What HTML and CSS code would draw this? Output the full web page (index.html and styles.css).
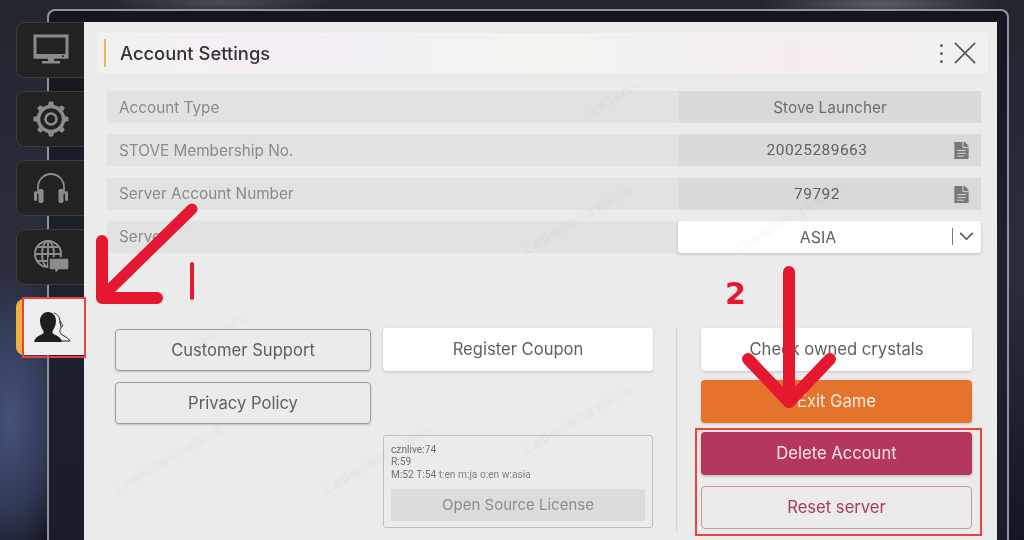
FILE: index.html
```html
<!DOCTYPE html>
<html lang="en">
<head>
<meta charset="utf-8">
<title>Account Settings</title>
<link rel="stylesheet" href="styles.css">
</head>
<body>
<div class="frame"></div>
<div class="stage">
  <nav class="sidebar">
    <div class="tab">
      <svg class="icon" viewBox="0 0 36 32"><rect x="2" y="2" width="32" height="21" fill="none" stroke="#8c8c8c" stroke-width="3"/><rect x="1" y="20" width="34" height="4.500" fill="#8c8c8c"/><circle cx="30" cy="22.200" r="1" fill="#222"/><path d="M15 24h6v3h-6z" fill="#8c8c8c"/><rect x="9" y="27" width="18" height="2.500" fill="#8c8c8c"/></svg>
    </div>
    <div class="tab">
      <svg class="icon" viewBox="0 0 36 36"><g fill="#8c8c8c"><path id="t" d="M15 4l1-3.500h4l1 3.500z"/><path d="M15 4l1-3.500h4l1 3.500z" transform="rotate(45 18 18)"/><path d="M15 4l1-3.500h4l1 3.500z" transform="rotate(90 18 18)"/><path d="M15 4l1-3.500h4l1 3.500z" transform="rotate(135 18 18)"/><path d="M15 4l1-3.500h4l1 3.500z" transform="rotate(180 18 18)"/><path d="M15 4l1-3.500h4l1 3.500z" transform="rotate(225 18 18)"/><path d="M15 4l1-3.500h4l1 3.500z" transform="rotate(270 18 18)"/><path d="M15 4l1-3.500h4l1 3.500z" transform="rotate(315 18 18)"/></g><circle cx="18" cy="18" r="12.500" fill="none" stroke="#8c8c8c" stroke-width="3.500"/><circle cx="18" cy="18" r="5.500" fill="none" stroke="#8c8c8c" stroke-width="2.500"/></svg>
    </div>
    <div class="tab">
      <svg class="icon" viewBox="0 0 36 36"><path d="M5 24V17a13 13 0 0 1 26 0v7" fill="none" stroke="#8c8c8c" stroke-width="1.800"/><rect x="1" y="21" width="3" height="10" rx="1.500" fill="#8c8c8c"/><rect x="5.500" y="19" width="5" height="14" rx="2" fill="#8c8c8c"/><rect x="25.500" y="19" width="5" height="14" rx="2" fill="#8c8c8c"/><rect x="32" y="21" width="3" height="10" rx="1.500" fill="#8c8c8c"/></svg>
    </div>
    <div class="tab">
      <svg class="icon" viewBox="0 0 36 36"><g fill="none" stroke="#8c8c8c" stroke-width="2"><circle cx="15" cy="15" r="13"/><ellipse cx="15" cy="15" rx="6" ry="13"/><path d="M2 15h26M4 8h22M4 22h22M15 2v26"/></g><path d="M16 19h20v12H26l-3.500 4-1-4H16z" fill="#8c8c8c" stroke="#222" stroke-width="1.500"/></svg>
    </div>
    <div class="tab tab-active">
      <svg class="icon icon-user" viewBox="0 0 38 32"><path d="M20 2c4 1 6 5 6 9 0 3 2 4 1 6s-2 4 0 6 7 3 9 7H26" fill="none" stroke="#222" stroke-width="1"/><path d="M14 1c5 0 8 4 8 9 0 4-2 8-3.500 10-.5 2 .5 3 3 4 3 1 5.500 3 6.500 7H0c1-4 3.500-6 6.500-7 2.500-1 3.500-2 3-4C8 18 6 14 6 10c0-5 3-9 8-9z" fill="#1f1f1f"/><path d="M26 10l3 5-2 1z" fill="#fff" stroke="#222" stroke-width=".8"/></svg>
    </div>
  </nav>
  <main class="panel">
    <header class="titlebar">
      <span class="tick"></span>
      <h1 class="title">Account Settings</h1>
      <span class="dots"><i></i><i></i><i></i></span>
      <svg class="close" viewBox="0 0 24 24"><path d="M1 1l22 22M23 1L1 23" fill="none" stroke="#555" stroke-width="1.800"/></svg>
    </header>
    <section class="rows">
      <div class="row"><span class="label">Account Type</span><span class="value">Stove Launcher</span></div>
      <div class="row"><span class="label">STOVE Membership No.</span><span class="value value-num">20025289663<svg class="doc" viewBox="0 0 15 20"><path d="M0 1h9l6 5v13H0z" fill="#777"/><path d="M10 0l5 5h-5z" fill="#777"/><path d="M9 1v6h6" fill="none" stroke="#d9d9d9"/><path d="M3 10h9M3 13h9M3 16h7" stroke="#d9d9d9"/></svg></span></div>
      <div class="row"><span class="label">Server Account Number</span><span class="value value-num">79792<svg class="doc" viewBox="0 0 15 20"><path d="M0 1h9l6 5v13H0z" fill="#777"/><path d="M10 0l5 5h-5z" fill="#777"/><path d="M9 1v6h6" fill="none" stroke="#d9d9d9"/><path d="M3 10h9M3 13h9M3 16h7" stroke="#d9d9d9"/></svg></span></div>
      <div class="row"><span class="label">Server</span><span class="select"><span class="select-text">ASIA</span><span class="select-sep"></span><svg class="chev" viewBox="0 0 16 10"><path d="M1 1l7 7 7-7" fill="none" stroke="#555" stroke-width="1.800"/></svg></span></div>
    </section>
    <section class="actions">
      <div class="col col-left">
        <button class="btn btn-outline">Customer Support</button>
        <button class="btn btn-outline">Privacy Policy</button>
      </div>
      <div class="col col-mid">
        <button class="btn btn-white">Register Coupon</button>
        <div class="version">
          <p class="version-text">cznlive:74<br>R:59<br>M:52 T:54 <span class="thin">t:en m:ja o:en w:asia</span></p>
          <div class="license">Open Source License</div>
        </div>
      </div>
      <div class="col col-right">
        <button class="btn btn-white">Check owned crystals</button>
        <button class="btn btn-orange">Exit Game</button>
        <button class="btn btn-crimson">Delete Account</button>
        <button class="btn btn-reset">Reset server</button>
      </div>
    </section>
    <span class="mark m1">上海幕指网络科技有限公司</span>
    <span class="mark m2">上海幕指网络科技有限公司</span>
    <span class="mark m3">上海幕指网络科技有限公司</span>
    <span class="mark m4">上海幕指网络科技有限公司</span>
    <span class="mark m5">上海幕指网络科技有限公司</span>
    <span class="mark m6">马赛 | 8433</span>
    <span class="mark m7">马赛 | 8433</span>
  </main>
</div>
<span class="note-box box-tab"></span>
<span class="note-box box-danger"></span>
<svg class="arrows" viewBox="0 0 1024 540"><g fill="none" stroke="#e5182f" stroke-linecap="round" stroke-linejoin="round"><path d="M192 209L104 295" stroke-width="11"/><path d="M102 241V298H157" stroke-width="12"/><path d="M192 264V298" stroke-width="4"/><path d="M789 272V402" stroke-width="12"/><path d="M748 359L789 402L830 359" stroke-width="12"/></g></svg>
<span class="note-two">2</span>
</body>
</html>
```
FILE: styles.css
```css
* { box-sizing: border-box; }
html, body { margin: 0; width: 1024px; height: 540px; overflow: hidden; }
body {
  position: relative;
  font-family: Inter, "Noto Sans CJK SC", sans-serif;
  background:
    radial-gradient(ellipse 60px 150px at 10px 420px, #46527a 0%, rgba(60,70,105,.7) 60%, transparent 100%),
    radial-gradient(ellipse 120px 14px at 880px 4px, #5a5d68 0%, transparent 100%),
    radial-gradient(ellipse 120px 14px at 220px 2px, #4a4c55 0%, transparent 100%),
    linear-gradient(180deg, #23252e 0%, #2a2d3c 50%, #141621 100%);
}
.frame {
  position: absolute;
  left: 47px;
  top: 9px;
  width: 962px;
  height: 531px;
  border: 2px solid #8e92a0;
  border-bottom: 0;
  border-radius: 8px 8px 0 0;
  background: linear-gradient(180deg, #14151d 0%, #1e2130 50%, #1a1c28 100%);
  filter: blur(.4px);
}
.stage {
  position: relative;
  display: flex;
  height: 540px;
  padding: 22px 27px 0 16px;
  filter: blur(.45px);
}
.sidebar {
  flex: 0 0 68px;
  display: flex;
  flex-direction: column;
  gap: 13px;
}
.tab {
  height: 56px;
  display: flex;
  align-items: center;
  justify-content: center;
  background: #222222;
  border: 1px solid #3c3c3c;
  border-right: 0;
  border-radius: 9px 0 0 9px;
}
.icon { width: 36px; height: 36px; }
.tab-active {
  margin-top: 1px;
  padding-left: 6px;
  background: linear-gradient(90deg, #edb23f 6px, #eeeeee 6px);
  border: 0;
  border-radius: 8px 0 0 8px;
}
.icon-user { width: 38px; height: 32px; }
.panel {
  position: relative;
  flex: 1;
  background: #ebebeb;
  padding: 11px 9px 0 14px;
  overflow: hidden;
}
.titlebar {
  display: flex;
  align-items: center;
  height: 40px;
  padding: 0 11px 0 5px;
  border: 1px solid #f4f4f4;
  border-radius: 2px;
  background: linear-gradient(90deg, #f1f1f1 0%, #f5eff5 15%, #f2eff4 30%, #f3f3ee 50%, #f1f1f1 60%, #f5ecef 78%, #f1f1f1 100%);
}
.tick { width: 2px; height: 28px; margin-right: 14px; background: #e8b95d; }
.title { flex: 1; margin: 0; font-size: 18.400px; font-weight: 500; color: #333333; white-space: nowrap; }
.dots { display: flex; flex-direction: column; gap: 5px; margin-right: 11px; }
.dots i { display: block; width: 3px; height: 3px; border-radius: 50%; background: #666; }
.close { width: 22px; height: 22px; }
.rows {
  display: flex;
  flex-direction: column;
  gap: 11.300px;
  margin: 18px 7px 0 9px;
}
.row { display: flex; height: 32px; background: #e2e2e2; border-radius: 2px; }
.label {
  flex: 1;
  display: flex;
  align-items: center;
  padding-left: 12px;
  font-size: 15.300px;
  color: #8a8a8a;
  white-space: nowrap;
}
.value {
  position: relative;
  flex: 0 0 302px;
  display: flex;
  align-items: center;
  justify-content: center;
  background: #d9d9d9;
  font-size: 15.400px;
  color: #6e6e6e;
  white-space: nowrap;
}
.value-num { padding-right: 26px; font-family: Roboto, sans-serif; font-weight: 400; font-size: 15.500px; letter-spacing: .45px; color: #5f5f5f; }
.doc { position: absolute; right: 12px; top: 7px; width: 15px; height: 19px; }
.select {
  position: relative;
  flex: 0 0 303px;
  display: flex;
  align-items: center;
  padding-right: 7px;
  background: #ffffff;
  box-shadow: 0 1px 3px rgba(0,0,0,.2);
  border-radius: 2px;
  font-size: 16px;
  color: #606060;
}
.select-text { flex: 1; text-align: center; padding-left: 6px; }
.select-sep { width: 1px; height: 17px; margin-right: 6px; background: #777; }
.chev { width: 15px; height: 9px; }
.actions {
  display: flex;
  margin: 75px 0 0 17px;
  height: 210px;
}
.col { display: flex; flex-direction: column; }
.col-left { flex: 0 0 256px; gap: 11px; padding-top: 1px; }
.col-mid { flex: 0 0 270px; margin-left: 12px; }
.col-right {
  flex: 0 0 296px;
  margin-left: 23px;
  padding-left: 24px;
  gap: 9px;
  border-left: 1px solid #d2d2d2;
  height: 204px;
}
.btn {
  display: block;
  width: 100%;
  height: 43px;
  padding: 0;
  border: 0;
  border-radius: 4px;
  font-family: inherit;
  font-size: 16.600px;
  font-weight: 400;
  color: #5f5f5f;
  background: transparent;
  white-space: nowrap;
}
.btn-outline { height: 42px; border: 1px solid #9d9d9d; box-shadow: 0 1px 2px rgba(0,0,0,.18); }
.btn-white { background: #ffffff; box-shadow: 0 1px 3px rgba(0,0,0,.18); }
.btn-orange { background: #e5732b; color: #fbeee2; box-shadow: 0 1px 3px rgba(0,0,0,.18); }
.btn-crimson { background: #b5375d; color: #f8e6eb; box-shadow: 0 1px 3px rgba(0,0,0,.25); }
.btn-reset { margin-top: 2px; border: 1px solid #c596a6; color: #a93a62; }
.version {
  width: 270px;
  height: 93px;
  margin-top: 64px;
  padding: 8px 7px 6px;
  border: 1px solid #bdbdbd;
  border-radius: 3px;
}
.version-text { margin: 0; height: 45px; font-family: Roboto, sans-serif; font-size: 10.200px; line-height: 12.500px; color: #707070; }
.thin { color: #808080; }
.license {
  height: 32px;
  display: flex;
  align-items: center;
  justify-content: center;
  background: #dcdcdc;
  font-size: 15px;
  font-weight: 400;
  color: #8c8c8c;
}
.mark {
  position: absolute;
  font-size: 10.500px;
  color: rgba(0,0,0,.04);
  white-space: nowrap;
  transform: rotate(-30deg);
  pointer-events: none;
}
.m1 { left: 20px; top: 430px; }
.m2 { left: 230px; top: 430px; }
.m3 { left: 430px; top: 190px; }
.m4 { left: 640px; top: 190px; }
.m5 { left: 430px; top: 390px; }
.m6 { left: 110px; top: 300px; }
.m7 { left: 500px; top: 70px; }
.note-box { position: absolute; border: 2px solid #e8443f; filter: blur(.3px); }
.box-tab { left: 22px; top: 297px; width: 64px; height: 61px; }
.box-danger { left: 695px; top: 428px; width: 287px; height: 108px; }
.arrows { position: absolute; left: 0; top: 0; width: 1024px; height: 540px; pointer-events: none; filter: blur(.4px); }
.note-two {
  position: absolute;
  left: 725px;
  top: 274px;
  font-family: "DejaVu Sans", sans-serif;
  font-size: 30px;
  font-weight: 700;
  line-height: 40px;
  color: #e5182f;
  filter: blur(.4px);
}
```
